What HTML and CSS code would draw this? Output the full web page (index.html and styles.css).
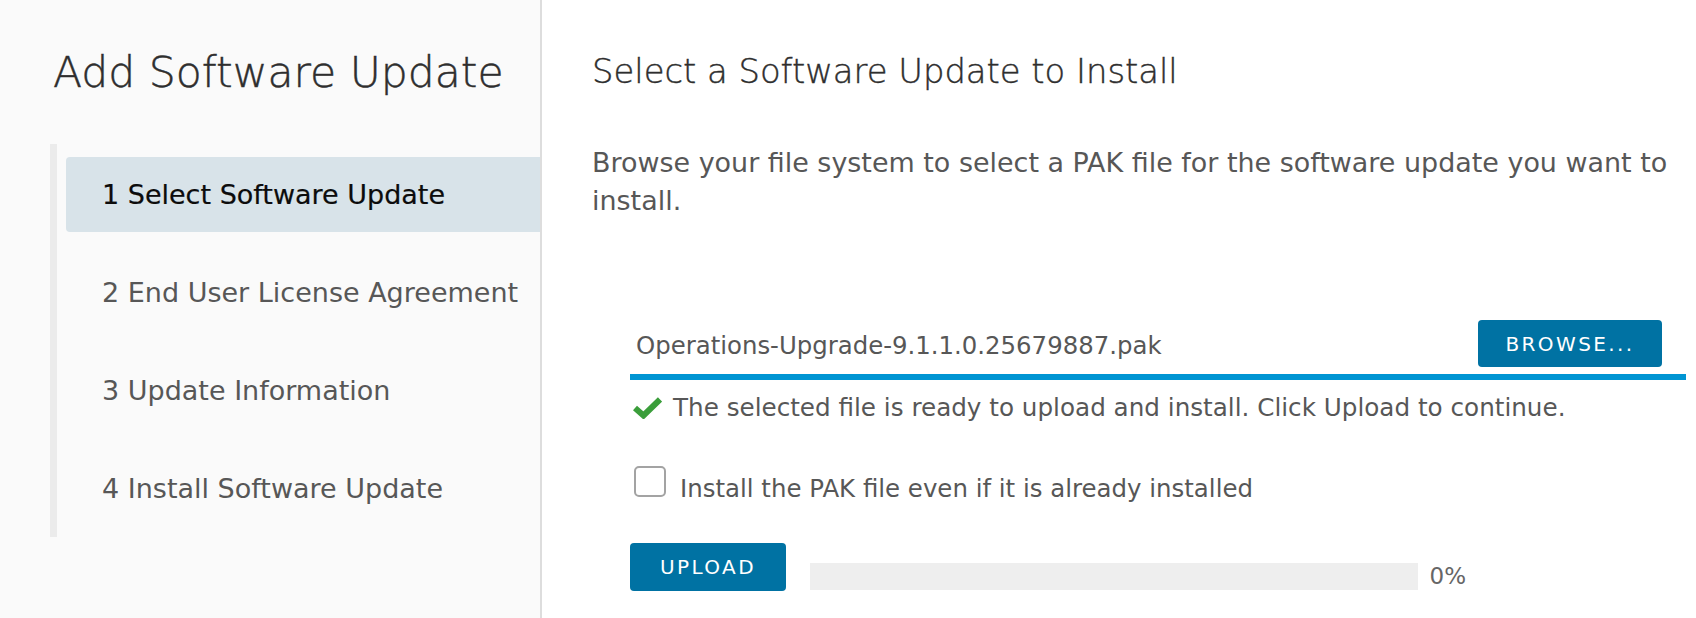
FILE: index.html
```html
<!DOCTYPE html>
<html lang="en">
<head>
<meta charset="utf-8">
<title>Add Software Update</title>
<link rel="stylesheet" href="styles.css">
</head>
<body>
<div class="wizard">
  <aside class="sidebar">
    <h1 class="wizard-title">Add Software Update</h1>
    <nav class="stepnav">
      <div class="step active">1 Select Software Update</div>
      <div class="step">2 End User License Agreement</div>
      <div class="step">3 Update Information</div>
      <div class="step">4 Install Software Update</div>
    </nav>
  </aside>
  <main class="content">
    <h2 class="page-title">Select a Software Update to Install</h2>
    <p class="intro">Browse your file system to select a PAK file for the software update you want to install.</p>
    <div class="form">
      <div class="file-row">
        <span class="file-name">Operations-Upgrade-9.1.1.0.25679887.pak</span>
        <button class="btn btn-browse" type="button">Browse...</button>
      </div>
      <div class="status">
        <svg class="check-icon" viewBox="0 0 29 22" aria-hidden="true">
          <path d="M2 11 L10.5 18.5 L27 2.5" fill="none" stroke="#3b9e3b" stroke-width="6" stroke-linejoin="miter" stroke-miterlimit="3"/>
        </svg>
        <span>The selected file is ready to upload and install. Click Upload to continue.</span>
      </div>
      <label class="check-row">
        <input class="checkbox" type="checkbox">
        <span class="check-label">Install the PAK file even if it is already installed</span>
      </label>
      <div class="upload-row">
        <button class="btn btn-upload" type="button">Upload</button>
        <div class="progress"><div class="progress-fill"></div></div>
        <span class="pct">0%</span>
      </div>
    </div>
  </main>
</div>
</body>
</html>
```
FILE: styles.css
```css
html, body {
  margin: 0;
  padding: 0;
  height: 100%;
}

body {
  font-family: "DejaVu Sans", "Liberation Sans", sans-serif;
  background: #ffffff;
  color: #565656;
}

.wizard {
  display: flex;
  height: 618px;
  overflow: hidden;
}

/* ---------- sidebar ---------- */
.sidebar {
  flex: 0 0 490px;
  padding: 48px 0 0 50px;
  background: #fafafa;
  border-right: 2px solid #dddddd;
}

.wizard-title {
  margin: 0;
  padding-left: 3px;
  font-size: 42.5px;
  line-height: 50px;
  font-weight: 200;
  color: #2e2e2e;
  -webkit-text-stroke: 0.45px #2e2e2e;
  white-space: nowrap;
}

.stepnav {
  display: flex;
  flex-direction: column;
  gap: 23px;
  margin-top: 46px;
  padding: 13px 0 11px 9px;
  border-left: 7px solid #ebebeb;
}

.step {
  height: 75px;
  line-height: 75px;
  padding-left: 36px;
  font-size: 27px;
  color: #575757;
  white-space: nowrap;
  border-radius: 4px 0 0 4px;
}

.step.active {
  background: #d8e3e9;
  color: #0c0c0c;
  -webkit-text-stroke: 0.2px #0c0c0c;
}

/* ---------- content ---------- */
.content {
  flex: 1;
  padding: 52px 0 0 50px;
}

.page-title {
  margin: 0;
  font-size: 33.8px;
  line-height: 40px;
  font-weight: 200;
  color: #2e2e2e;
  -webkit-text-stroke: 0.4px #2e2e2e;
  white-space: nowrap;
}

.intro {
  margin: 52px 0 0;
  font-size: 26.95px;
  line-height: 38px;
  color: #575757;
}

.form {
  margin: 100px 10px 0 38px;
}

.file-row {
  display: flex;
  align-items: center;
  justify-content: space-between;
  height: 47px;
  padding: 0 24px 7px 6px;
  border-bottom: 6px solid #0095d3;
}

.file-name {
  margin-top: 4px;
  font-size: 24.4px;
  color: #575757;
  white-space: nowrap;
}

.btn {
  padding: 0;
  border: 0;
  border-radius: 4px;
  background: #0072a3;
  color: #ffffff;
  font-family: inherit;
  font-size: 20px;
  letter-spacing: 0.12em;
  text-transform: uppercase;
  text-align: center;
  cursor: pointer;
}

.btn-browse {
  width: 184px;
  height: 47px;
}

.btn-upload {
  width: 156px;
  height: 48px;
}

.status {
  display: flex;
  align-items: center;
  gap: 11px;
  margin-top: 12.5px;
  padding-left: 3px;
  font-size: 24.65px;
  line-height: 30px;
  color: #575757;
  white-space: nowrap;
}

.check-icon {
  flex: 0 0 29px;
  width: 29px;
  height: 22px;
}

.check-row {
  display: flex;
  align-items: flex-start;
  gap: 14px;
  margin-top: 43.5px;
  padding-left: 4px;
  cursor: pointer;
}

.checkbox {
  appearance: none;
  -webkit-appearance: none;
  flex: 0 0 auto;
  width: 32px;
  height: 31px;
  margin: 0;
  box-sizing: border-box;
  border: 2px solid #a3a3a3;
  border-radius: 5px;
  background: #ffffff;
}

.check-label {
  padding-top: 8px;
  font-size: 24.45px;
  line-height: 30px;
  color: #575757;
  white-space: nowrap;
}

.upload-row {
  display: flex;
  align-items: flex-end;
  margin-top: 38.5px;
}

.progress {
  width: 608px;
  height: 27px;
  margin: 0 0 1px 24px;
  background: #eeeeee;
}

.progress-fill {
  width: 0;
  height: 100%;
  background: #0095d3;
}

.pct {
  margin: 0 0 1px 11.5px;
  font-size: 23px;
  line-height: 27px;
  color: #666666;
}
```
